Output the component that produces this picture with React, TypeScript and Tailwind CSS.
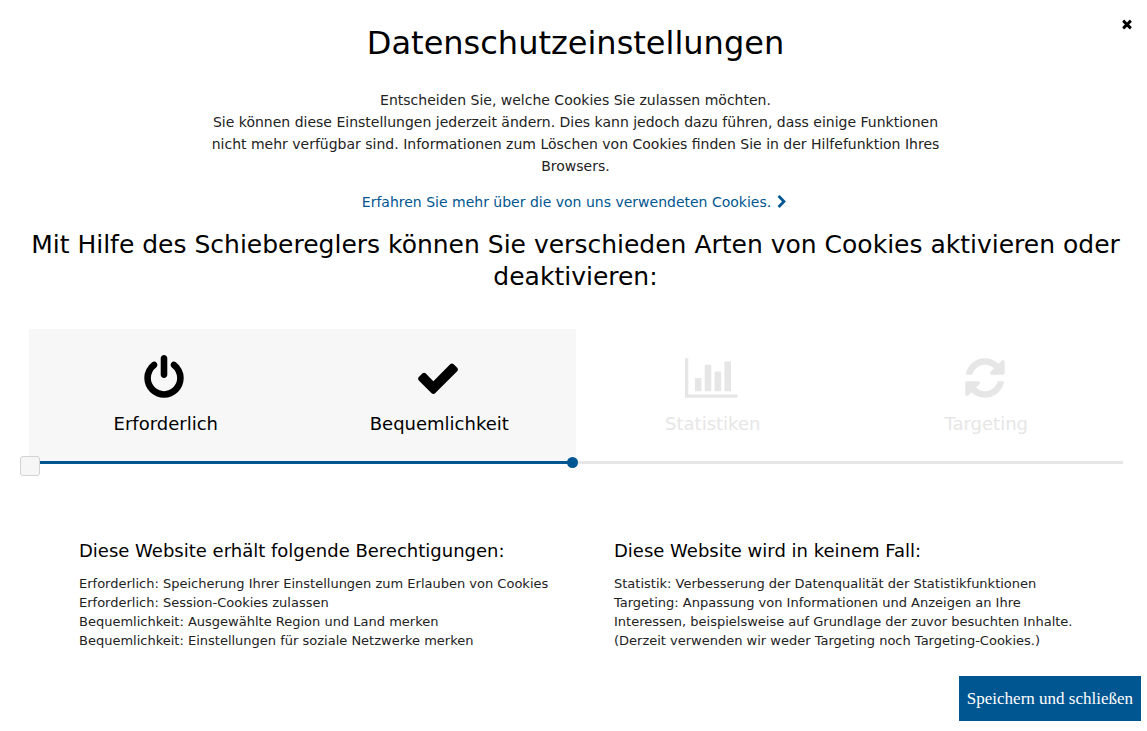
import React, { useState } from 'react';

interface IconProps {
	path: string;
	viewBox?: string;
	className?: string;
}

interface CookieLevel {
	label: string;
	path: string;
	viewBox?: string;
}

interface PermissionListProps {
	title: string;
	items: string[];
}

const CLOSE = 'M1490 1322q0 40-28 68l-136 136q-28 28-68 28t-68-28l-294-294-294 294q-28 28-68 28t-68-28l-136-136q-28-28-28-68t28-68l294-294-294-294q-28-28-28-68t28-68l136-136q28-28 68-28t68 28l294 294 294-294q28-28 68-28t68 28l136 136q28 28 28 68t-28 68l-294 294 294 294q28 28 28 68z';
const CHEVRON = 'M1363 877l-742 742q-19 19-45 19t-45-19l-166-166q-19-19-19-45t19-45l531-531-531-531q-19-19-19-45t19-45l166-166q19-19 45-19t45 19l742 742q19 19 19 45t-19 45z';

const levels: CookieLevel[] = [
	{
		label: 'Erforderlich',
		path: 'M1664 896q0 156-61 298t-164 245-245 164-298 61-298-61-245-164-164-245-61-298q0-182 80.5-343t226.5-270q43-32 95.5-25t83.5 50q32 42 24.5 94.5t-49.5 84.5q-98 74-151.5 181t-53.5 228q0 104 40.5 198.5t109.5 163.5 163.5 109.5 198.5 40.5 198.5-40.5 163.5-109.5 109.5-163.5 40.5-198.5q0-121-53.5-228t-151.5-181q-42-32-49.5-84.5t24.5-94.5q31-43 84-50t95 25q146 109 226.5 270t80.5 343zm-640-768v640q0 52-38 90t-90 38-90-38-38-90v-640q0-52 38-90t90-38 90 38 38 90z',
	},
	{
		label: 'Bequemlichkeit',
		path: 'M1671 566q0 40-28 68l-724 724-136 136q-28 28-68 28t-68-28l-136-136-362-362q-28-28-28-68t28-68l136-136q28-28 68-28t68 28l294 295 656-657q28-28 68-28t68 28l136 136q28 28 28 68z',
	},
	{
		label: 'Statistiken',
		path: 'M640 1024v512h-256v-512h256zm384-512v1024h-256v-1024h256zm1024 1152v128h-2048v-1536h128v1408h1920zm-640-896v768h-256v-768h256zm384-384v1152h-256v-1152h256z',
		viewBox: '0 128 2048 1792',
	},
	{
		label: 'Targeting',
		path: 'M1639 1056q0 5-1 7-64 268-268 434.5t-478 166.5q-146 0-282.5-55t-243.5-157l-129 129q-19 19-45 19t-45-19-19-45v-448q0-26 19-45t45-19h448q26 0 45 19t19 45-19 45l-137 137q71 66 161 102t187 36q134 0 250-65t186-179q11-17 53-117 8-23 30-23h192q13 0 22.5 9.5t9.5 22.5zm25-800v448q0 26-19 45t-45 19h-448q-26 0-45-19t-19-45 19-45l138-138q-148-137-349-137-134 0-250 65t-186 179q-11 17-53 117-8 23-30 23h-199q-13 0-22.5-9.5t-9.5-22.5v-7q65-268 270-434.5t480-166.5q146 0 284 55.5t245 156.5l130-129q19-19 45-19t45 19 19 45z',
	},
];

const Icon = ({ path, viewBox = '0 0 1792 1792', className }: IconProps) => (
	<svg viewBox={viewBox} className={className} fill="currentColor" aria-hidden="true">
		<path d={path} />
	</svg>
);

const PermissionList = ({ title, items }: PermissionListProps) => (
	<section className="flex-1">
		<h3 className="text-[18px] leading-6 text-black">{title}</h3>
		<ul className="mt-[11px] text-[13px] leading-[19px]">
			{items.map((item) => (
				<li key={item}>{item}</li>
			))}
		</ul>
	</section>
);

const App = () => {
	const [position, setPosition] = useState(0);
	const [allowed, setAllowed] = useState(2);

	const handleChange = (e: React.ChangeEvent<HTMLInputElement>) => {
		const value = Number(e.target.value);
		setPosition(value);
		setAllowed(Math.max(1, value));
	};

	return (
		<main className="relative bg-white pt-5 pb-[10px] font-['DejaVu_Sans',Verdana,sans-serif] text-[#222]">
			<button type="button" aria-label="Schließen" className="absolute top-[17px] right-[13px] text-black">
				<Icon path={CLOSE} className="size-[14px]" />
			</button>

			<div className="pr-4 pl-5 text-center">
				<header className="mx-auto max-w-[750px] text-[14px] leading-[22px]">
					<h1 className="text-[32px] leading-[46px] text-black">Datenschutzeinstellungen</h1>
					<p className="mt-[23px]">
						Entscheiden Sie, welche Cookies Sie zulassen möchten.
						<br />
						Sie können diese Einstellungen jederzeit ändern. Dies kann jedoch dazu führen, dass einige Funktionen
						nicht mehr verfügbar sind. Informationen zum Löschen von Cookies finden Sie in der Hilfefunktion Ihres
						Browsers.
					</p>
					<a href="#cookies" className="mt-[14px] inline-flex items-center gap-1 text-[#005691]">
						Erfahren Sie mehr über die von uns verwendeten Cookies.
						<Icon path={CHEVRON} className="size-[14px]" />
					</a>
				</header>

				<h2 className="mt-4 text-[25px] leading-8 text-black">
					Mit Hilfe des Schiebereglers können Sie verschieden Arten von Cookies aktivieren oder deaktivieren:
				</h2>
			</div>

			<div className="mx-6 mt-9 pl-[5px]">
				<div className="grid grid-cols-4">
					{levels.map((level, index) => (
						<div
							key={level.label}
							className={`flex flex-col items-center pt-[26px] pb-[25px] ${index < allowed ? 'bg-[#f7f7f7] text-black' : 'text-[#e6e6e6]'}`}
						>
							<Icon path={level.path} viewBox={level.viewBox} className="mr-[3px] h-[46px] w-auto" />
							<span className="mt-[11px] text-[18px] leading-6">{level.label}</span>
						</div>
					))}
				</div>
				<div className="relative h-[3px] bg-[#e6e6e6]">
					<div className="flex h-full items-center justify-end bg-[#005691]" style={{ width: `${allowed * 25}%` }}>
						<span className="-mr-0.5 size-[11px] shrink-0 rounded-full bg-[#005691]" />
					</div>
					<input
						type="range"
						min={0}
						max={4}
						value={position}
						onChange={handleChange}
						aria-label="Cookie-Stufe"
						className="absolute -inset-x-[9px] -top-[5px] h-5 cursor-pointer appearance-none bg-transparent [&::-webkit-slider-thumb]:size-5 [&::-webkit-slider-thumb]:appearance-none [&::-webkit-slider-thumb]:rounded-[3px] [&::-webkit-slider-thumb]:border [&::-webkit-slider-thumb]:border-[#d3d3d3] [&::-webkit-slider-thumb]:bg-[#f6f6f6]"
					/>
				</div>
			</div>

			<div className="mt-[75px] flex gap-[60px] pr-[58px] pl-[79px]">
				<PermissionList
					title="Diese Website erhält folgende Berechtigungen:"
					items={[
						'Erforderlich: Speicherung Ihrer Einstellungen zum Erlauben von Cookies',
						'Erforderlich: Session-Cookies zulassen',
						'Bequemlichkeit: Ausgewählte Region und Land merken',
						'Bequemlichkeit: Einstellungen für soziale Netzwerke merken',
					]}
				/>
				<PermissionList
					title="Diese Website wird in keinem Fall:"
					items={[
						'Statistik: Verbesserung der Datenqualität der Statistikfunktionen',
						'Targeting: Anpassung von Informationen und Anzeigen an Ihre Interessen, beispielsweise auf Grundlage der zuvor besuchten Inhalte. (Derzeit verwenden wir weder Targeting noch Targeting-Cookies.)',
					]}
				/>
			</div>

			<div className="mt-[26px] flex justify-end pr-[6px]">
				<button type="button" className="h-[45px] bg-[#005691] px-2 font-['Liberation_Serif',serif] text-[17px] text-white">
					Speichern und schließen
				</button>
			</div>
		</main>
	);
};

export default App;
